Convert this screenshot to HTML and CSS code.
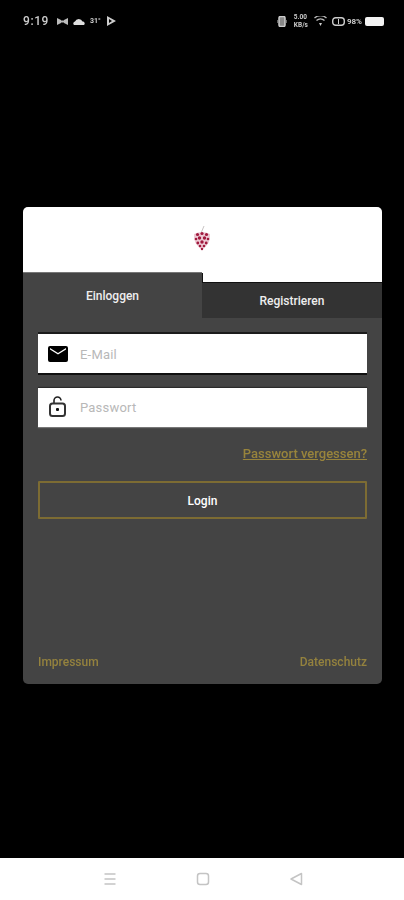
FILE: index.html
```html
<!DOCTYPE html>
<html lang="de">
<head>
    <meta charset="UTF-8">
    <meta name="viewport" content="width=device-width, initial-scale=1.0">
    <title>Login</title>
    <link rel="stylesheet" href="styles.css">
</head>
<body>
    <div class="screen">
        <div class="status-bar">
            <div class="status-left">
                <span class="time">9:19</span>
                <svg class="st-icon" width="11" height="9" viewBox="0 0 11 9"><path d="M0 1l4 2v3l-4 2zM11 1l-4 2v3l4 2zM4 3.500h3v2H4z" fill="#bbb"/></svg>
                <svg class="st-icon" width="12" height="7" viewBox="0 0 12 7"><path d="M1 7a2 2 0 0 1 1-3.500 4 4 0 0 1 7.500 0 2 2 0 0 1 1.500 3.500z" fill="#ddd"/></svg>
                <span class="temp">31°</span>
                <svg class="st-icon" width="9" height="10" viewBox="0 0 9 10"><path d="M0 0l9 5-9 5zM2 3v4l3-2z" fill="#ccc" fill-rule="evenodd"/></svg>
            </div>
            <div class="status-right">
                <svg width="10" height="11" viewBox="0 0 10 11"><rect x="2" y="0.500" width="6" height="10" rx="1.500" fill="#888" stroke="#ccc" stroke-width="1.500"/><path d="M0 4v3M10 4v3" stroke="#ccc"/></svg>
                <span class="speed"><span>5.00</span><span>KB/s</span></span>
                <svg width="13" height="10" viewBox="0 0 13 10"><path d="M0.500 2a9 9 0 0 1 12 0M2.500 4.500a6 6 0 0 1 8 0" fill="none" stroke="#bbb" stroke-width="1.300"/><path d="M5 7h3l-1.500 3z" fill="#ccc"/></svg>
                <svg width="13" height="9" viewBox="0 0 13 9"><rect x="0.700" y="0.700" width="11.600" height="7.600" rx="3" fill="none" stroke="#ccc" stroke-width="1.400"/><path d="M6.500 2v5" stroke="#ccc"/></svg>
                <span class="percent">98%</span>
                <span class="battery"></span>
            </div>
        </div>

        <main class="main">
            <div class="card">
                <div class="logo-area">
                    <svg width="20" height="26" viewBox="0 0 20 26">
                        <path d="M9.500 7l2.500-6" stroke="#c9c4c4" stroke-width="1"/>
                        <path d="M2 9q8-4 16 0q0.500 7-3 11q-2.500 3-5 5q-2.500-2-5-5q-3.500-4-3-11z" fill="#edc9d4"/>
                        <g fill="#a01a3e">
                            <circle cx="5.500" cy="9.500" r="1.600"/><circle cx="10" cy="8.500" r="1.600"/><circle cx="14.500" cy="9.500" r="1.600"/>
                            <circle cx="7.500" cy="13" r="1.700"/><circle cx="12.500" cy="13" r="1.700"/>
                            <circle cx="4" cy="14" r="1.300"/><circle cx="16" cy="14" r="1.300"/>
                            <circle cx="10" cy="17" r="1.700"/><circle cx="5.800" cy="18" r="1.400"/><circle cx="14.200" cy="18" r="1.400"/>
                            <circle cx="8" cy="21" r="1.300"/><circle cx="12" cy="21" r="1.300"/>
                            <circle cx="10" cy="24" r="1.200"/>
                        </g>
                    </svg>
                </div>
                <div class="tabs">
                    <div class="tab tab-active">Einloggen</div>
                    <div class="tab tab-inactive">Registrieren</div>
                </div>
                <form class="login-form">
                    <div class="field field-first">
                        <svg class="field-icon" width="20" height="16" viewBox="0 0 20 16"><path d="M2 0h16a2 2 0 0 1 2 2v12a2 2 0 0 1-2 2H2a2 2 0 0 1-2-2V2a2 2 0 0 1 2-2zM2 3.500l8 5 8-5V2l-8 5-8-5z" fill="#000" fill-rule="evenodd"/></svg>
                        <input class="field-input" type="text" placeholder="E-Mail">
                    </div>
                    <div class="field field-second">
                        <svg class="field-icon" width="17" height="21" viewBox="0 0 17 21"><path d="M5 7V4.500a3.500 3.500 0 0 1 7 0" fill="none" stroke="#222" stroke-width="1.600"/><rect x="1" y="7.500" width="15" height="12.500" rx="2.500" fill="none" stroke="#333" stroke-width="2"/><rect x="7" y="12" width="3" height="3" rx="1" fill="#111"/></svg>
                        <input class="field-input" type="password" placeholder="Passwort">
                    </div>
                    <div class="forgot-row"><a class="forgot" href="#">Passwort vergessen?</a></div>
                    <button class="login-btn" type="button">Login</button>
                </form>
                <div class="card-footer">
                    <a class="footer-link" href="#">Impressum</a>
                    <a class="footer-link" href="#">Datenschutz</a>
                </div>
            </div>
        </main>

        <div class="nav-bar">
            <svg width="14" height="14" viewBox="0 0 14 14"><path d="M1.500 2h11M1.500 7h11M1.500 12h11" stroke="#c4c4c4" stroke-width="1.500"/></svg>
            <svg width="14" height="14" viewBox="0 0 14 14"><rect x="1.500" y="1.500" width="11" height="11" rx="2.500" fill="none" stroke="#c4c4c4" stroke-width="1.500"/></svg>
            <svg width="14" height="14" viewBox="0 0 14 14"><path d="M12.500 1.500v11L2 7z" fill="none" stroke="#c4c4c4" stroke-width="1.500" stroke-linejoin="round"/></svg>
        </div>
    </div>
</body>
</html>
```

FILE: styles.css
```css
* {
    box-sizing: border-box;
}
body {
    margin: 0;
    background-color: #000;
    font-family: Roboto, sans-serif;
}
.screen {
    width: 404px;
    height: 900px;
    display: flex;
    flex-direction: column;
}
.status-bar {
    height: 40px;
    padding: 2px 20px 0 23px;
    display: flex;
    justify-content: space-between;
    align-items: center;
    color: #ccc;
    filter: blur(0.5px);
}
.status-left, .status-right {
    display: flex;
    align-items: center;
}
.status-left {
    gap: 5px;
}
.status-right {
    gap: 5px;
}
.time {
    font-size: 12px;
    font-weight: 500;
    letter-spacing: 0.6px;
    margin-right: 3px;
    color: #ccc;
}
.temp {
    font-size: 7px;
    font-weight: 700;
    margin-right: 1px;
}
.speed {
    display: flex;
    flex-direction: column;
    font-size: 6.5px;
    font-weight: 700;
    line-height: 8px;
    margin: 0 1px 0 2px;
}
.percent {
    font-size: 8px;
    font-weight: 700;
    margin-left: -3px;
    margin-right: -2px;
}
.battery {
    width: 19px;
    height: 9px;
    border-radius: 2px;
    background-color: #f2f2f2;
}
.main {
    flex: 1;
    padding: 167px 22px 0 23px;
}
.card {
    height: 477px;
    background-color: #444;
    border-radius: 5px;
    overflow: hidden;
    display: flex;
    flex-direction: column;
}
.logo-area {
    height: 65px;
    background-color: #fff;
    display: flex;
    justify-content: center;
    padding-top: 18px;
    filter: blur(0.3px);
}
.logo-area svg {
    margin-right: 2px;
}
.tabs {
    display: grid;
    grid-template-columns: 179px 1fr;
    height: 46px;
    background-color: #fff;
}
.tab {
    display: flex;
    align-items: center;
    justify-content: center;
    color: #eee;
    font-size: 12px;
    font-weight: 500;
}
.tab-active {
    background-color: #444;
    border-top: 1px solid #777;
}
.tab-inactive {
    position: relative;
    margin-top: 10px;
    background-color: #333;
    border-top: 1px solid #111;
}
/* dark edge of the step between the two tabs */
.tab-inactive::before {
    content: "";
    position: absolute;
    left: 0;
    top: -10px;
    width: 1px;
    height: 10px;
    background-color: #111;
}
.login-form {
    padding: 16px 15px 0;
    display: flex;
    flex-direction: column;
}
.field {
    height: 39px;
    margin-top: 15px;
    display: flex;
    align-items: center;
    background-color: #fff;
}
.field-first {
    margin-top: 0;
    box-shadow: 0 -2px 0 #1c1c1c, 0 2px 0 #111;
}
.field-second {
    box-shadow: 0 -1px 1px #2a2a2a, 0 1px 1px #777;
}
.field-icon {
    flex: none;
    margin-left: 10px;
}
.field-input {
    flex: 1;
    min-width: 0;
    height: 100%;
    border: none;
    outline: none;
    padding: 2px 0 0;
    margin-left: 12px;
    background: transparent;
    font-family: Roboto, sans-serif;
    font-size: 13px;
    letter-spacing: 0.2px;
}
.field-second .field-icon {
    margin: -3px 0 0 11px;
}
.field-second .field-input {
    margin-left: 14px;
    padding-top: 0;
}
.field-input::placeholder {
    color: #b8b8b8;
    opacity: 1;
}
.forgot-row {
    margin-top: 18px;
    display: flex;
    justify-content: flex-end;
}
.forgot {
    color: #98843c;
    font-size: 13px;
    font-weight: 500;
    line-height: 18px;
    filter: blur(0.3px);
}
.login-btn {
    margin-top: 18px;
    height: 38px;
    padding-top: 3px;
    background: transparent;
    border: 2px solid #7d6c33;
    border-radius: 1px;
    color: #fff;
    font-family: Roboto, sans-serif;
    font-size: 12px;
    font-weight: 500;
    cursor: pointer;
}
.card-footer {
    margin-top: auto;
    padding: 0 15px 14px;
    display: flex;
    justify-content: space-between;
}
.footer-link {
    color: #94823e;
    font-size: 12px;
    font-weight: 500;
    line-height: 16px;
    text-decoration: none;
    filter: blur(0.3px);
}
.nav-bar {
    height: 42px;
    background-color: #fff;
    display: flex;
    justify-content: center;
    align-items: center;
    gap: 79px;
    padding-left: 1px;
    filter: blur(0.4px);
}
```
